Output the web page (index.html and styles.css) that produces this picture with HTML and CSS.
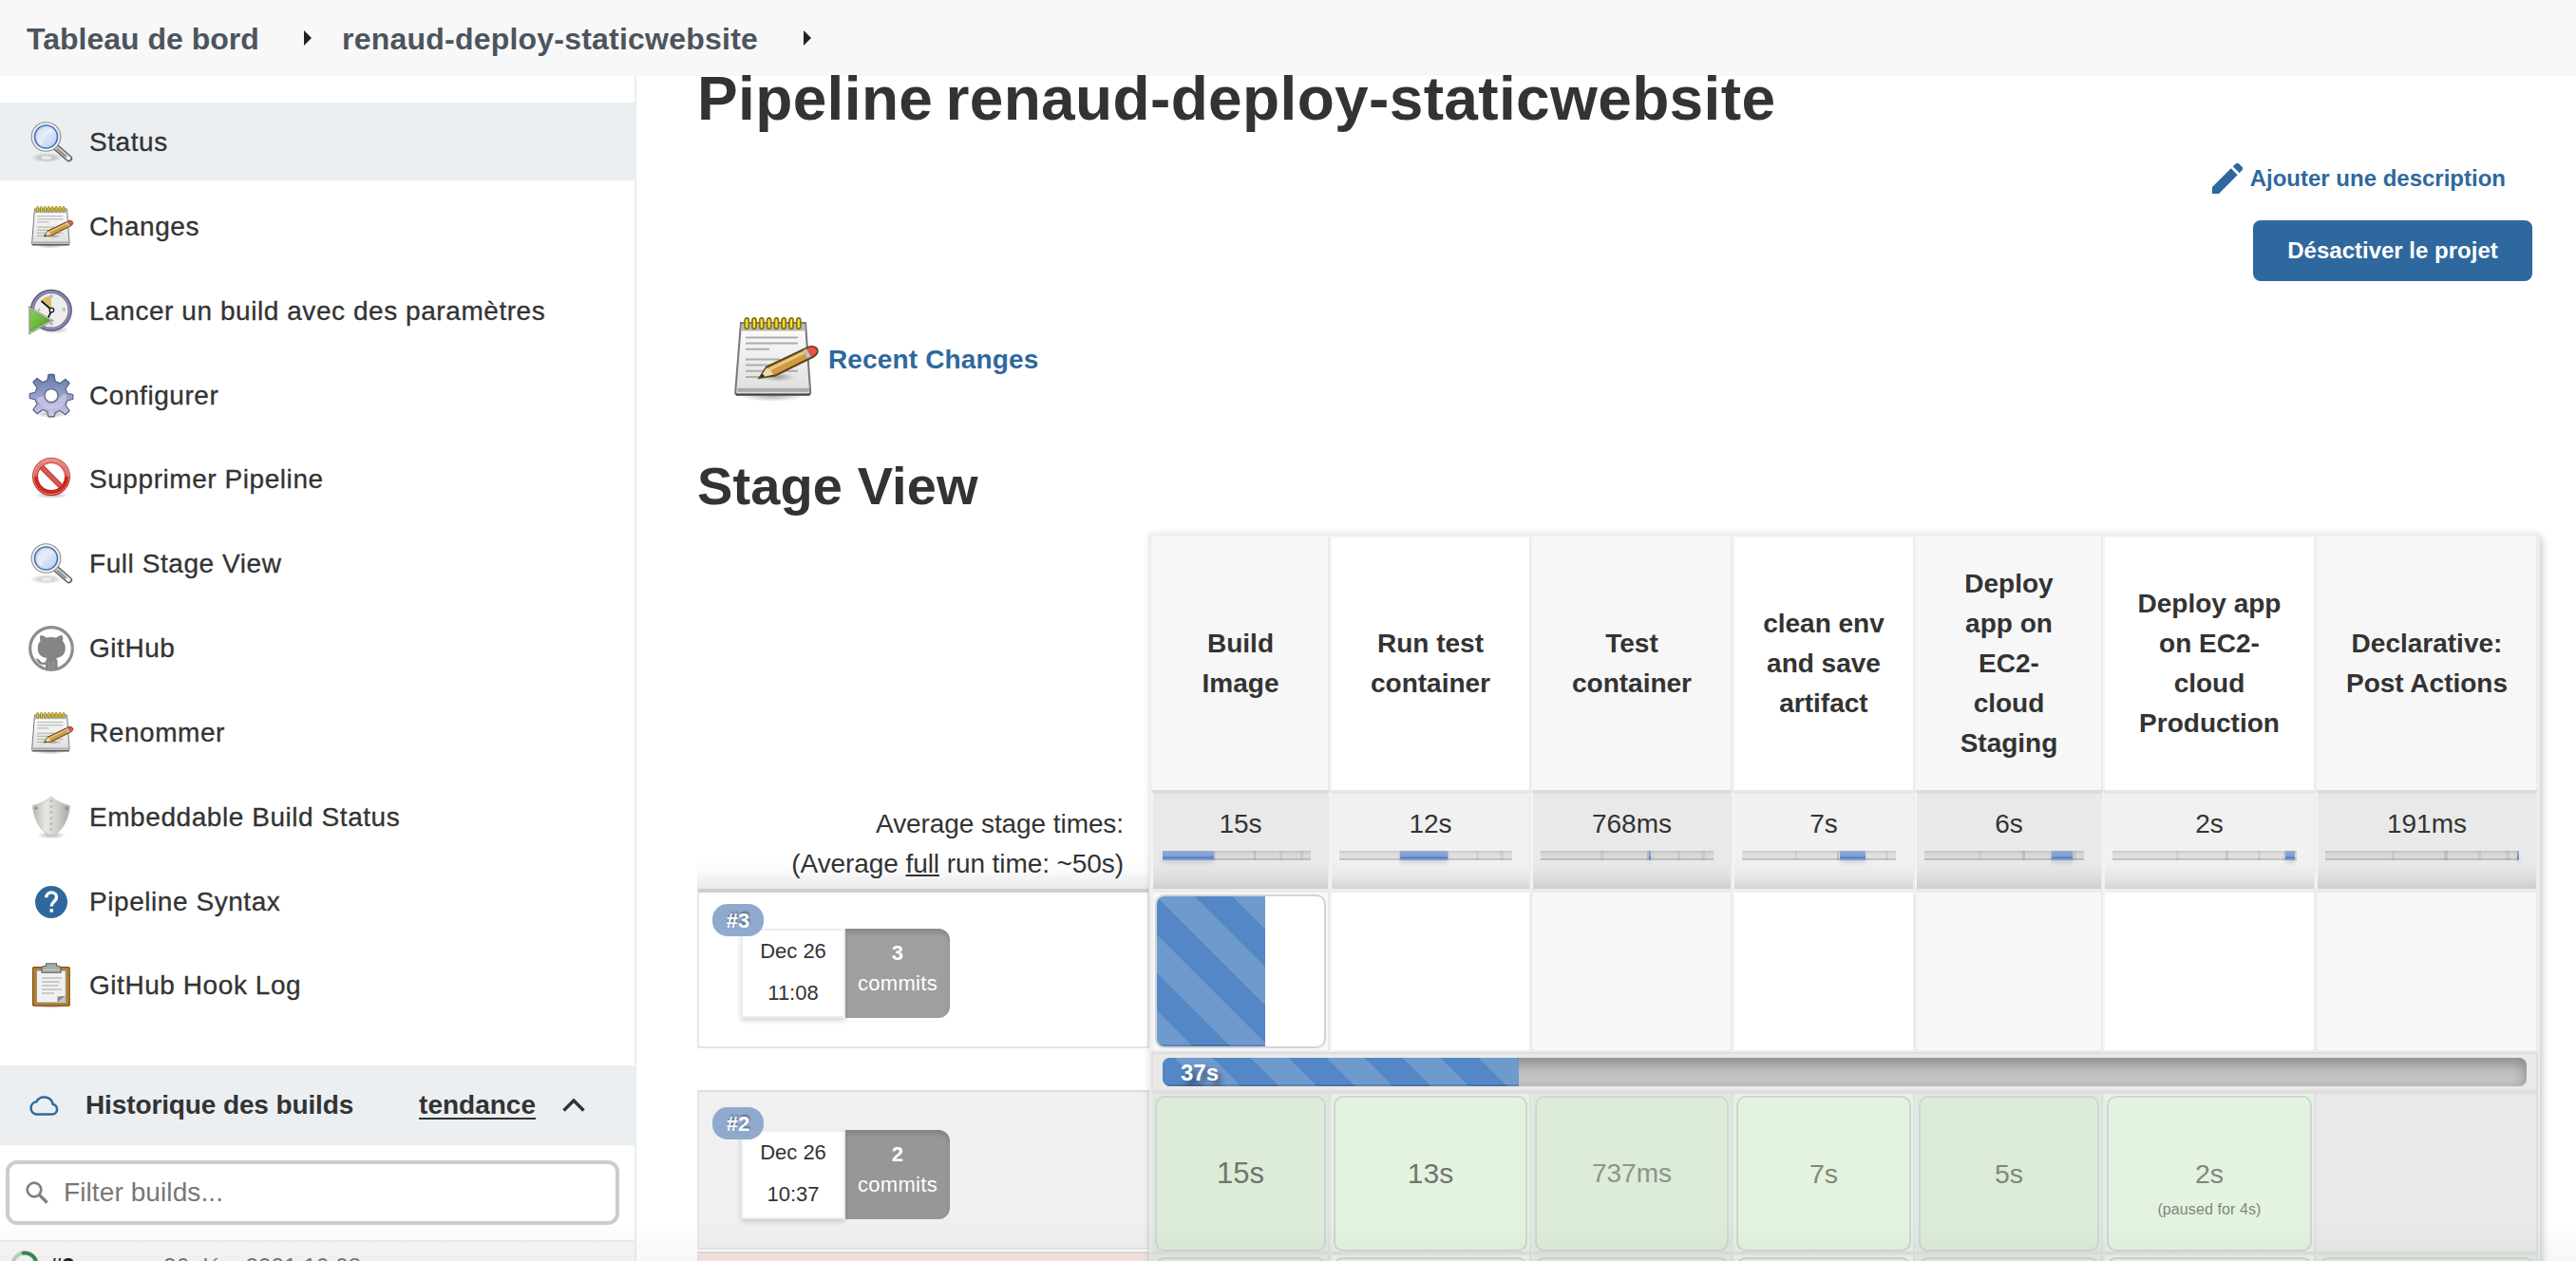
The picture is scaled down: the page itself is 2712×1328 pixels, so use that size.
FILE: index.html
```html
<!DOCTYPE html>
<html lang="fr">
<head>
<meta charset="utf-8">
<title>renaud-deploy-staticwebsite [Jenkins]</title>
<link rel="stylesheet" href="styles.css">
</head>
<body>
<svg class="defs" width="0" height="0" aria-hidden="true">
  <defs>
    <linearGradient id="g-lens" x1="0" y1="0" x2="1" y2="1"><stop offset="0" stop-color="#a9c4e6"/><stop offset=".5" stop-color="#dbe7f7"/><stop offset="1" stop-color="#b4cdee"/></linearGradient>
    <linearGradient id="g-page" x1="0" y1="0" x2="0" y2="1"><stop offset="0" stop-color="#fdfdfd"/><stop offset="1" stop-color="#dedede"/></linearGradient>
    <linearGradient id="g-gear" x1="0" y1="0" x2="0" y2="1"><stop offset="0" stop-color="#5f79a5"/><stop offset=".6" stop-color="#a3a8cf"/><stop offset="1" stop-color="#cfc6e6"/></linearGradient>
    <linearGradient id="g-red" x1="0" y1="0" x2="0" y2="1"><stop offset="0" stop-color="#e58a86"/><stop offset=".48" stop-color="#dd6560"/><stop offset=".52" stop-color="#c62820"/><stop offset="1" stop-color="#cf2a22"/></linearGradient>
    <linearGradient id="g-play" x1="0" y1="0" x2="1" y2="1"><stop offset="0" stop-color="#8fd45a"/><stop offset="1" stop-color="#3f9b1c"/></linearGradient>
    <linearGradient id="g-shield" x1="0" y1="0" x2="1" y2="0"><stop offset="0" stop-color="#b4b7b1"/><stop offset=".35" stop-color="#e6e8e4"/><stop offset=".6" stop-color="#d4d6d1"/><stop offset="1" stop-color="#a5a8a2"/></linearGradient>
    <radialGradient id="g-shadow"><stop offset="0" stop-color="#000" stop-opacity=".32"/><stop offset="1" stop-color="#000" stop-opacity="0"/></radialGradient>
    <symbol id="i-search" viewBox="0 0 48 48">
      <ellipse cx="19" cy="40" rx="17" ry="5" fill="url(#g-shadow)"/>
      <ellipse cx="19" cy="40" rx="6" ry="2" fill="#fff" opacity=".7"/>
      <path d="M29.500 29.500 42.600 40.800" stroke="#5a5a58" stroke-width="7" stroke-linecap="round"/>
      <path d="M29.500 29.500 42.400 40.600" stroke="#c9c9c7" stroke-width="4.600" stroke-linecap="round"/>
      <path d="M30 30.600 39 38.600" stroke="#8b8b89" stroke-width="1.800"/>
      <circle cx="42" cy="40.400" r="1.900" fill="#f3f3f2"/>
      <circle cx="18.500" cy="18" r="15.300" fill="#f4f4f2" stroke="#8c8d89" stroke-width="1.100"/>
      <circle cx="18.500" cy="18" r="12" fill="url(#g-lens)" stroke="#4774bd" stroke-width="1.700"/>
      <path d="M9 18c0-6 4-9.500 9-9.500 4 0 7 2 8 4-6 1-10 5-12 13-3-1-5-4-5-7.500z" fill="#fff" opacity=".4"/>
    </symbol>
    <symbol id="i-note" viewBox="0 0 48 48">
      <ellipse cx="23" cy="43.500" rx="17" ry="3" fill="url(#g-shadow)"/>
      <path d="M6.500 5h34l2.600 36.500c0 .9-.6 1.400-1.400 1.400H5c-.8 0-1.500-.5-1.400-1.400z" fill="url(#g-page)" stroke="#777" stroke-width="1"/>
      <path d="M7 5.500h33.200l.3 3.800H6.800z" fill="#b9b9b7"/>
      <path d="M4.600 39.400h37.800v2H4.600z" fill="#a9aaa9"/>
      <path d="M3.800 42.800h39" stroke="#444" stroke-width="1"/>
      <path d="M9 12.700h27.500M9 15.800h27.500M9 18.900h12.500M9 24.200h18M9 27.300h27.500M9 30.400h27.500M9 33.500h9" stroke="#adadad" stroke-width="1"/>
      <g fill="#f4e24c" stroke="#8f7700" stroke-width=".9"><rect x="8.600" y="2.500" width="2" height="5.600" rx="1"/><rect x="12.500" y="2.500" width="2" height="5.600" rx="1"/><rect x="16.400" y="2.500" width="2" height="5.600" rx="1"/><rect x="20.300" y="2.500" width="2" height="5.600" rx="1"/><rect x="24.200" y="2.500" width="2" height="5.600" rx="1"/><rect x="28.100" y="2.500" width="2" height="5.600" rx="1"/><rect x="32" y="2.500" width="2" height="5.600" rx="1"/><rect x="35.900" y="2.500" width="2" height="5.600" rx="1"/></g>
      <ellipse cx="26" cy="33.500" rx="9" ry="2.500" fill="url(#g-shadow)"/>
      <path d="M16.300 34 20 28.300 42 17.800c2.500-.9 5 .2 4.800 2.400-.2 1.200-1.200 2.100-2.500 2.800L24.500 32.800z" fill="#cf9a45" stroke="#5d400f" stroke-width="1"/>
      <path d="M21.500 29.500 40 20.500" stroke="#ecc987" stroke-width="1.300"/>
      <path d="M41 18.600 42.700 17.900c2-.6 3.800.3 3.700 2-.1 1-1 1.900-2.100 2.400l-1 .5z" fill="#e8504a"/>
      <path d="M39.300 19.400 41 18.600l2.300 4.200-1.800.9z" fill="#b9c0c9"/>
      <path d="M16.300 34 20 28.800l2 .8 1.500 2.600z" fill="#ead7ac"/>
      <path d="M16.300 34l1.500-2.300 1.300 1.600z" fill="#222"/>
    </symbol>
    <symbol id="i-clock" viewBox="0 0 48 48">
      <ellipse cx="27" cy="43" rx="16" ry="4.500" fill="url(#g-shadow)"/>
      <circle cx="23.800" cy="22.800" r="19.800" fill="#ededeb" stroke="#6d6d92" stroke-width="4"/>
      <circle cx="23.800" cy="22.800" r="21.600" fill="none" stroke="#54547a" stroke-width=".8"/>
      <circle cx="23.800" cy="22.800" r="19.600" fill="none" stroke="#a9a9c8" stroke-width="1"/>
      <path d="M24 21V8c-4 0-8 1-11 5z" fill="#d9bd67"/>
      <g fill="#b9b9b8"><circle cx="24" cy="8" r="1.800"/><circle cx="37.300" cy="22" r="1.800"/><circle cx="24" cy="37" r="1.800"/><circle cx="11" cy="22" r="1.500"/></g>
      <path d="M13.500 13 24.500 22.500 20.500 31" fill="none" stroke="#111" stroke-width="1.700"/>
      <circle cx="24.400" cy="22.600" r="2.300" fill="#fff" stroke="#111" stroke-width="1.200"/>
      <path d="M.9 20.200 24.500 33.400.9 47z" fill="url(#g-play)" stroke="#5b6b52" stroke-width="2"/>
      <path d="M.9 20.200 24.500 33.400.9 47z" fill="none" stroke="#e9f2e4" stroke-width="1"/>
    </symbol>
    <symbol id="i-gear" viewBox="0 0 48 48">
      <ellipse cx="24" cy="43" rx="18" ry="4" fill="url(#g-shadow)"/>
      <path d="M21 1h6l1.200 7.200 4.800 2 6-4.300 4.200 4.200-4.200 6 2 4.800 5.800 1.200v5l-5.800 1.200-2 4.800 4.200 6-4.200 4.200-6-4.200-4.800 2L27 45.500h-6l-1.200-5.400-4.800-2-6 4.200-4.200-4.200 4.200-6-2-4.800L1.200 26.100v-5L7 19.900l2-4.800-4.200-6L9 4.900l6 4.300 4.800-2z" transform="translate(0 .4)" fill="url(#g-gear)" stroke="#4d5a80" stroke-width="1.100" stroke-linejoin="round"/>
      <path d="M10 26c3-1 5-3 7-2s-1 6 4 8 8-1 12-6 6-5 7-3-1 10-7 13-16 2-20-3-5-6-3-7z" fill="#d5d2ec" opacity=".55"/>
      <circle cx="24" cy="23.600" r="7" fill="#fff" stroke="#5a668d" stroke-width="1.300"/>
    </symbol>
    <symbol id="i-no" viewBox="0 0 48 48">
      <ellipse cx="24" cy="40.500" rx="18" ry="3.500" fill="url(#g-shadow)"/>
      <g fill="none"><path d="M12 9 36.500 33.500" stroke="#b2231c" stroke-width="5.600"/><path d="M12 9 36.500 33.500" stroke="#da5a54" stroke-width="4"/>
      <circle cx="24" cy="21" r="17" stroke="#b62a23" stroke-width="6"/><circle cx="24" cy="21" r="17" stroke="url(#g-red)" stroke-width="4.600"/><circle cx="24" cy="21" r="18.600" stroke="#f0aca8" stroke-width=".7"/></g>
    </symbol>
    <symbol id="i-octo" viewBox="0 0 48 48">
      <circle cx="24" cy="24" r="22.300" fill="#fff" stroke="#8d8d8d" stroke-width="3.200"/>
      <path d="M12.500 10c2.200 0 4.700 1.300 6.500 2.600 3.200-.7 6.800-.7 10 0 1.800-1.300 4.300-2.600 6.500-2.600.9 2 1 4.200.5 6 2 2.200 2.800 4.700 2.800 7.600 0 7-4 9.800-9.800 10.500 1.200 1.200 1.600 2.600 1.600 4.600v7.600H18v-5.600c-5 1-7.200-.8-8.800-3.500-.7-1.200-1.500-2-2.400-2.600 2.800-.6 4.600 1 6 2.800 1.400 1.500 3 1.600 5.200.9.100-1.700.6-3.100 1.500-4.200-5.800-.7-9.800-3.500-9.800-10.500 0-2.900.8-5.400 2.800-7.600-.6-1.800-.6-4 0-6z" fill="#858585"/>
      <path d="M22 37v9M26 37v9" stroke="#a9a9a9" stroke-width=".8"/>
    </symbol>
    <symbol id="i-shield" viewBox="0 0 48 48">
      <ellipse cx="24" cy="42.500" rx="15" ry="4" fill="url(#g-shadow)"/>
      <path d="M24 2c5 5 12 7.500 19.500 9.500C42.500 26 36 38 24 44 12 38 5.500 26 4.500 11.500 12 9.500 19 7 24 2z" fill="url(#g-shield)" stroke="#c3c5c0" stroke-width="1"/>
      <path d="M24 5v37" stroke="#bcbeb9" stroke-width="2.600" stroke-dasharray="3 3"/>
      <circle cx="8" cy="14" r="1.500" fill="#858883"/><circle cx="40" cy="14" r="1.500" fill="#858883"/>
    </symbol>
    <symbol id="i-help" viewBox="0 0 48 48">
      <circle cx="24" cy="24" r="17" fill="#2f689e"/>
      <path d="M18.800 19.300c0-3.300 2.200-5.400 5.300-5.400s5.400 2 5.400 5c0 4.200-5.300 4.400-5.300 9.600" fill="none" stroke="#fff" stroke-width="3.400"/>
      <path d="M22.500 31.200h3.500v3.500h-3.500z" fill="#fff"/>
    </symbol>
    <symbol id="i-clip" viewBox="0 0 48 48">
      <ellipse cx="24" cy="45.500" rx="18" ry="2.500" fill="url(#g-shadow)"/>
      <rect x="4.600" y="4.700" width="38.600" height="40.500" rx="1" fill="#b9802f" stroke="#7b4f0f" stroke-width="1.200"/>
      <path d="M8.500 8h30.800v34H8.500z" fill="#f1f1f0" stroke="#85887f" stroke-width=".9"/>
      <path d="M14 16h21M14 20h19M14 24h17M14 28h21M14 32h13" stroke="#bdbdbb" stroke-width="1.700"/>
      <path d="M30.500 42v-6.500L39 34.800z" fill="#8b8d88"/><path d="M30.500 42 39 34.800V42z" fill="#c4c6c2"/>
      <path d="M18.500 3V.8h11V3l3.500.8c.6.200 1 .6 1 1.200v5.200H14V5c0-.6.400-1 1-1.200z" fill="#a9aba3" stroke="#5e6059" stroke-width="1.100"/>
      <path d="M15 7.500h18" stroke="#c7c9c2" stroke-width="1.300"/>
    </symbol>
  </defs>
</svg>

<header class="crumbs">
  <a class="crumb">Tableau de bord</a><span class="crumb-arrow"></span>
  <a class="crumb crumb-job">renaud-deploy-staticwebsite</a><span class="crumb-arrow"></span>
</header>

<div class="page">
  <aside class="side">
    <nav class="tasks">
      <a class="task active"><svg class="task-icon"><use href="#i-search"/></svg><span>Status</span></a>
      <a class="task"><svg class="task-icon"><use href="#i-note"/></svg><span>Changes</span></a>
      <a class="task"><svg class="task-icon"><use href="#i-clock"/></svg><span>Lancer un build avec des paramètres</span></a>
      <a class="task"><svg class="task-icon"><use href="#i-gear"/></svg><span>Configurer</span></a>
      <a class="task"><svg class="task-icon"><use href="#i-no"/></svg><span>Supprimer Pipeline</span></a>
      <a class="task"><svg class="task-icon"><use href="#i-search"/></svg><span>Full Stage View</span></a>
      <a class="task"><svg class="task-icon"><use href="#i-octo"/></svg><span>GitHub</span></a>
      <a class="task"><svg class="task-icon"><use href="#i-note"/></svg><span>Renommer</span></a>
      <a class="task"><svg class="task-icon"><use href="#i-shield"/></svg><span>Embeddable Build Status</span></a>
      <a class="task"><svg class="task-icon"><use href="#i-help"/></svg><span>Pipeline Syntax</span></a>
      <a class="task"><svg class="task-icon"><use href="#i-clip"/></svg><span>GitHub Hook Log</span></a>
    </nav>
    <section class="history">
      <div class="history-head">
        <svg class="cloud" viewBox="0 0 32 24"><path d="M8 21.500h17a5.300 5.300 0 0 0 .8-10.500A9.500 9.500 0 0 0 8.200 8.300 6.700 6.700 0 0 0 8 21.500z" fill="none" stroke="#2f689e" stroke-width="2.500"/></svg>
        <span class="history-title">Historique des builds</span>
        <a class="trend">tendance</a>
        <svg class="chev" viewBox="0 0 24 14"><path d="M1.500 12.500 12 2l10.500 10.500" fill="none" stroke="#333" stroke-width="3.400"/></svg>
      </div>
      <div class="filter">
        <svg class="filter-icon" viewBox="0 0 24 24"><circle cx="9" cy="9" r="7.300" fill="none" stroke="#808080" stroke-width="2.700"/><path d="m14 14 8.500 8.500" stroke="#808080" stroke-width="3.200"/></svg>
        <span>Filter builds...</span>
      </div>
      <div class="build-row">
        <svg class="spin" viewBox="0 0 30 30"><circle cx="15" cy="15" r="12.500" fill="none" stroke="#b5d3bb" stroke-width="4"/><path d="M12 2.900A12.500 12.500 0 0 1 27.500 15" fill="none" stroke="#3d8a4d" stroke-width="4"/></svg>
        <b class="build-no">#3</b><span class="build-date">26 déc. 2021 10:08</span>
      </div>
    </section>
  </aside>

  <main class="main">
    <h1>Pipeline renaud-deploy-staticwebsite</h1>
    <div class="actions">
      <a class="describe"><svg class="pencil" viewBox="0 0 32 32"><path d="M0 25 19.800 5.300l6.900 6.900L7 32H0zM21.800 3.300 24.500.8a2.800 2.800 0 0 1 4 0l2.700 2.700a2.800 2.800 0 0 1 0 4l-2.600 2.700z" fill="#2f689e"/></svg><span>Ajouter une description</span></a>
      <button class="disable">Désactiver le projet</button>
    </div>
    <a class="recent"><svg class="recent-icon"><use href="#i-note"/></svg><span>Recent Changes</span></a>
    <h2>Stage View</h2>

    <div class="stages">
      <div class="runs">
        <div class="runs-avg"><span>Average stage times:</span><span>(Average <u>full</u> run time: ~50s)</span></div>
        <div class="run first">
          <span class="badge">#3</span>
          <div class="run-info"><div class="when"><span>Dec 26</span><span>11:08</span></div><div class="commits"><b>3</b><span>commits</span></div></div>
        </div>
        <div class="run gray">
          <span class="badge">#2</span>
          <div class="run-info"><div class="when"><span>Dec 26</span><span>10:37</span></div><div class="commits"><b>2</b><span>commits</span></div></div>
        </div>
        <div class="run failed"></div>
      </div>

      <div class="board">
        <div class="cell head">Build<br>Image</div><div class="cell head">Run test<br>container</div><div class="cell head">Test<br>container</div><div class="cell head">clean env<br>and save<br>artifact</div><div class="cell head">Deploy<br>app on<br>EC2-<br>cloud<br>Staging</div><div class="cell head">Deploy app<br>on EC2-<br>cloud<br>Production</div><div class="cell head">Declarative:<br>Post Actions</div>

        <div class="cell avg avg-first"><span>15s</span><div class="mini"><i style="left:0;width:34.7%"></i></div></div>
        <div class="cell avg"><span>12s</span><div class="mini"><i style="left:35.1%;width:27.4%"></i></div></div>
        <div class="cell avg"><span>768ms</span><div class="mini"><i style="left:62.6%;width:1.1%"></i></div></div>
        <div class="cell avg"><span>7s</span><div class="mini"><i style="left:63.8%;width:16.4%"></i></div></div>
        <div class="cell avg"><span>6s</span><div class="mini"><i style="left:79.5%;width:13.2%"></i></div></div>
        <div class="cell avg"><span>2s</span><div class="mini"><i style="left:93.7%;width:5.3%"></i></div></div>
        <div class="cell avg"><span>191ms</span><div class="mini"><i style="left:99%;width:1%"></i></div></div>

        <div class="cell live"><div class="card"><div class="card-fill" style="width:64.8%"></div></div></div><div class="cell live"></div><div class="cell live"></div><div class="cell live"></div><div class="cell live"></div><div class="cell live"></div><div class="cell live"></div>

        <div class="progress"><div class="track"><div class="track-fill" style="width:26.1%">37s</div></div></div>

        <div class="cell done"><div class="card t1">15s</div></div><div class="cell done"><div class="card t2">13s</div></div><div class="cell done"><div class="card t4">737ms</div></div><div class="cell done"><div class="card t3">7s</div></div><div class="cell done"><div class="card t3">5s</div></div><div class="cell done"><div class="card t3">2s<small>(paused for 4s)</small></div></div><div class="cell empty"></div>

        <div class="cell done next"><div class="card"></div></div><div class="cell done next"><div class="card"></div></div><div class="cell done next"><div class="card"></div></div><div class="cell done next"><div class="card"></div></div><div class="cell done next"><div class="card"></div></div><div class="cell done next"><div class="card"></div></div><div class="cell done next"><div class="card"></div></div>
      </div>
    </div>
  </main>
</div>
</body>
</html>
```
FILE: styles.css
```css
* { box-sizing: border-box; }

body {
  margin: 0;
  width: 2712px;
  height: 1328px;
  overflow: hidden;
  background: #fff;
  color: #333;
  font: 28px/42px "Liberation Sans", Arial, sans-serif;
}

/* fade along the lower window edge */
body::after {
  content: "";
  position: absolute;
  left: 0;
  right: 0;
  top: 1288px;
  height: 40px;
  background: linear-gradient(rgba(0, 0, 0, 0), rgba(0, 0, 0, .035));
}

.defs { position: absolute; }

.crumbs {
  display: flex;
  align-items: center;
  height: 80px;
  padding: 2px 0 0 28px;
  background: #f8f8f8;
  color: #4d545d;
  font-size: 32px;
  font-weight: bold;
}

.crumb { white-space: nowrap; width: 292px; }
.crumb-job { margin-left: 32px; width: 486px; letter-spacing: .22px; }

.crumb-arrow {
  border-left: 8px solid #222;
  border-top: 8px solid transparent;
  border-bottom: 8px solid transparent;
  margin-bottom: 3px;
}

.page { display: flex; height: 1248px; }

/* side panel */
.side {
  flex: none;
  width: 670px;
  border-right: 2px solid #e8eef3;
}

.tasks { padding-top: 28px; height: 1042px; }

.task {
  display: flex;
  align-items: center;
  height: 82px;
  margin-bottom: 6.85px;
  padding: 2px 0 0 30px;
  gap: 16px;
  letter-spacing: .56px;
  -webkit-text-stroke: .3px #333;
}

.task.active { background: #ebeff2; }
.task-icon { width: 48px; height: 48px; -webkit-text-stroke: 0; }

.history-head {
  display: flex;
  align-items: center;
  height: 84px;
  background: #ebeff2;
  padding: 0 52px 0 30px;
  font-weight: bold;
}

.cloud { width: 32px; height: 24px; margin-right: 28px; }
.history-title { flex: 1; letter-spacing: -.12px; }
.trend { text-decoration: underline; text-decoration-thickness: 2px; text-underline-offset: 4px; }
.chev { width: 24px; height: 14px; margin-left: 28px; }

.filter {
  display: flex;
  align-items: center;
  gap: 16px;
  height: 68px;
  margin: 16px 16px 16px 6px;
  padding-left: 17px;
  border: 4px solid #ccc;
  border-radius: 12px;
  color: #777;
  letter-spacing: .1px;
}

.filter-icon { width: 24px; height: 24px; }

.build-row {
  display: flex;
  align-items: flex-start;
  height: 60px;
  border-top: 2px solid #e8eef3;
  background: #f8f8f8;
  padding: 9px 0 0 11px;
  font-size: 24px;
  line-height: 34px;
  color: #777;
}

.spin { width: 30px; height: 30px; }
.build-no { color: #222; width: 120px; margin-left: 11px; }
.build-date { letter-spacing: .15px; }

/* main panel */
.main { width: 2042px; padding-left: 64px; }

h1 { margin: 0; font-size: 64px; line-height: 48px; letter-spacing: .36px; word-spacing: -5px; }

.actions {
  display: flex;
  flex-direction: column;
  align-items: flex-end;
  gap: 24px;
  height: 168px;
  margin-top: 40px;
  padding-right: 46px;
  font-size: 24px;
  font-weight: bold;
}

.describe {
  display: flex;
  align-items: center;
  gap: 8px;
  height: 40px;
  margin-right: 28px;
  color: #2f689e;
}

.pencil { width: 32px; height: 32px; }

.disable {
  width: 294px;
  height: 64px;
  border: 0;
  border-radius: 8px;
  padding: 0;
  background: #2f689e;
  color: #fff;
  font: inherit;
}

.recent {
  display: flex;
  align-items: center;
  height: 96px;
  margin: -6px 0 0 33px;
  color: #2f689e;
  font-weight: bold;
  letter-spacing: .15px;
}

.recent span { padding-top: 1px; }
.recent-icon { width: 96px; height: 96px; margin-right: 9px; }

h2 { margin: 54px 0 18px; font-size: 56px; line-height: 64px; letter-spacing: .1px; }

/* stage view */
.stages { display: flex; }

.runs { flex: none; width: 476px; padding-top: 274px; }

.runs-avg {
  display: flex;
  flex-direction: column;
  height: 100px;
  padding: 11px 27px 0 0;
  text-align: right;
  letter-spacing: -.08px;
  background: linear-gradient(transparent 68%, rgba(0, 0, 0, .02) 82%, rgba(0, 0, 0, .09));
}

.run {
  height: 168px;
  border: 2px solid #e6e6e6;
  padding: 14px 0 0 14px;
}

.run.first { border-top: 4px solid #d0d0d0; padding-top: 12px; margin-bottom: 44px; }
.run.gray { background: #f0f0f0; border-top-color: #ddd; padding-top: 16px; margin-bottom: 2px; }
.run.failed { background: #f8e5e2; border-top-color: #ddd; height: 40px; }

.badge {
  position: relative;
  display: block;
  width: 54px;
  height: 34px;
  border-radius: 16px;
  background: #8faacd;
  color: #fff;
  font-size: 22px;
  font-weight: bold;
  line-height: 36px;
  text-align: center;
  text-shadow: 1px -2px 2px rgba(0, 0, 0, .35);
}

.run-info { display: flex; width: 220px; height: 94px; margin: -8px 0 0 30px; font-size: 22px; text-align: center; }
.run.gray .run-info { margin-top: -10px; }

.when {
  display: flex;
  flex-direction: column;
  width: 110px;
  border: 2px solid #e8eef3;
  background: #fff;
  line-height: 44px;
  box-shadow: 0 3px 5px rgba(0, 0, 0, .16);
}

.commits {
  display: flex;
  flex-direction: column;
  width: 110px;
  padding-top: 10px;
  border-radius: 0 12px 12px 0;
  background: #9f9f9f;
  color: #fff;
  line-height: 32px;
  letter-spacing: .3px;
  box-shadow: inset 0 4px 5px rgba(0, 0, 0, .14);
}

.run.gray .commits { background: #979797; }

.board {
  display: grid;
  grid-template-columns: 188px 212px 212px 192px 198px 224px 234px;
  grid-template-rows: 268px 104px 172px 44px 168px 60px;
  width: 1464px;
  border: 2px solid #e8eef3;
  box-shadow: 3px 4px 8px rgba(0, 0, 0, .16), 0 0 8px rgba(0, 0, 0, .08);
}

.cell { border-left: 2px solid #f4f4f4; border-right: 2px solid #ececec; }

.head {
  display: flex;
  align-items: center;
  justify-content: center;
  text-align: center;
  font-weight: bold;
  border-top: 2px solid #f4f4f4;
}

.head:nth-child(odd), .live:nth-child(odd) { background: #f7f7f7; }

.avg {
  border-top: 4px solid #e6e6e6;
  padding: 11px 18px 0 8px;
  text-align: center;
  background: linear-gradient(#f1f1f1 72%, #e8e8e8 86%, #d6d6d6);
}

.avg-first { padding-left: 10px; }

.avg:nth-child(even) {
  border-top-color: #dcdcdc;
  background: linear-gradient(#e9e9e9 72%, #e0e0e0 86%, #cecece);
}

.avg span { display: block; margin: 0 -18px 0 -8px; }
.avg-first span { margin-left: -10px; }

.mini {
  position: relative;
  height: 10px;
  margin-top: 7px;
  border-bottom: 2px solid rgba(0, 0, 0, .06);
  background:
    linear-gradient(90deg, transparent 61.5%, rgba(0, 0, 0, .1) 61.5% 63%, transparent 63%),
    linear-gradient(90deg, transparent 34.5%, rgba(0, 0, 0, .06) 34.5% 36%, transparent 36%),
    linear-gradient(90deg, transparent 79%, rgba(0, 0, 0, .06) 79% 80.5%, transparent 80.5%),
    linear-gradient(90deg, transparent 93%, rgba(0, 0, 0, .06) 93% 95%, transparent 95%),
    linear-gradient(rgba(0, 0, 0, .16), rgba(0, 0, 0, .07) 50%);
}

.mini i {
  position: absolute;
  top: 0;
  height: 10px;
  background: linear-gradient(#8fadd0, #7e9fd0 60%, #5577c8 70%, #5577c8 80%, #7b9bdb 81%);
  box-shadow: 0 3px 4px rgba(0, 0, 0, .12);
}

.live { border-top: 4px solid #efefef; border-bottom: 2px solid #efefef; padding: 2px; }
.live:nth-child(odd) { border-color: #ebebeb; border-left-color: #f0f0f0; }

.card {
  display: flex;
  flex-direction: column;
  justify-content: center;
  height: 162px;
  border: 2px solid #d0d4d8;
  border-radius: 10px;
  overflow: hidden;
  text-align: center;
  position: relative;
}

.live .card { background: #fff; }

.card-fill, .track-fill {
  background-color: #5487c5;
  background-image: linear-gradient(45deg, rgba(255, 255, 255, .16) 25%, transparent 25% 50%, rgba(255, 255, 255, .16) 50% 75%, transparent 75%);
  background-size: 80px 80px;
  box-shadow: inset 0 -2px 0 rgba(0, 0, 0, .15);
}

.card-fill { height: 158px; }

.progress {
  grid-column: 1 / -1;
  border: 2px solid #dedede;
  border-bottom-width: 4px;
  background: #e9e9e9;
  padding: 4px 10px;
}

.track {
  height: 30px;
  border-radius: 8px;
  overflow: hidden;
  background: #c6c6c6;
  box-shadow: inset 0 6px 16px rgba(0, 0, 0, .33);
}

.track-fill {
  height: 30px;
  padding-left: 19px;
  background-position: 13px 0;
  color: #fff;
  font-size: 24px;
  font-weight: bold;
  line-height: 32px;
  text-shadow: 4px 5px 6px rgba(0, 0, 0, .5);
}

.done {
  padding: 2px;
  border-bottom: 2px solid #dedede;
  border-left-color: #e6e7e6;
  border-right-color: #dfe0df;
  background: #e4f3e0;
}

.done .card { height: 164px; color: #6f756d; }
.done:nth-child(odd) { background: #dcecd8; }
.done.next { border-top: 2px solid #e3e3e3; background: #e8f7e4; }
.done.next:nth-child(even) { background: #dfefdb; }
.done.next .card { height: 160px; }
.board { overflow: hidden; }
.empty { background: #e9e9e9; border-bottom: 2px solid #dedede; border-right-color: #dedede; border-left-color: #e6e6e6; }

.t1 { font-size: 31px; }
.t2 { font-size: 30px; }
.t3 { font-size: 28.5px; }
.done .t3 { color: #7f877d; }
.done .t4 { color: #8c958a; }

.card small { position: absolute; top: 97px; left: 0; right: 0; font-size: 16px; letter-spacing: .1px; }
```
